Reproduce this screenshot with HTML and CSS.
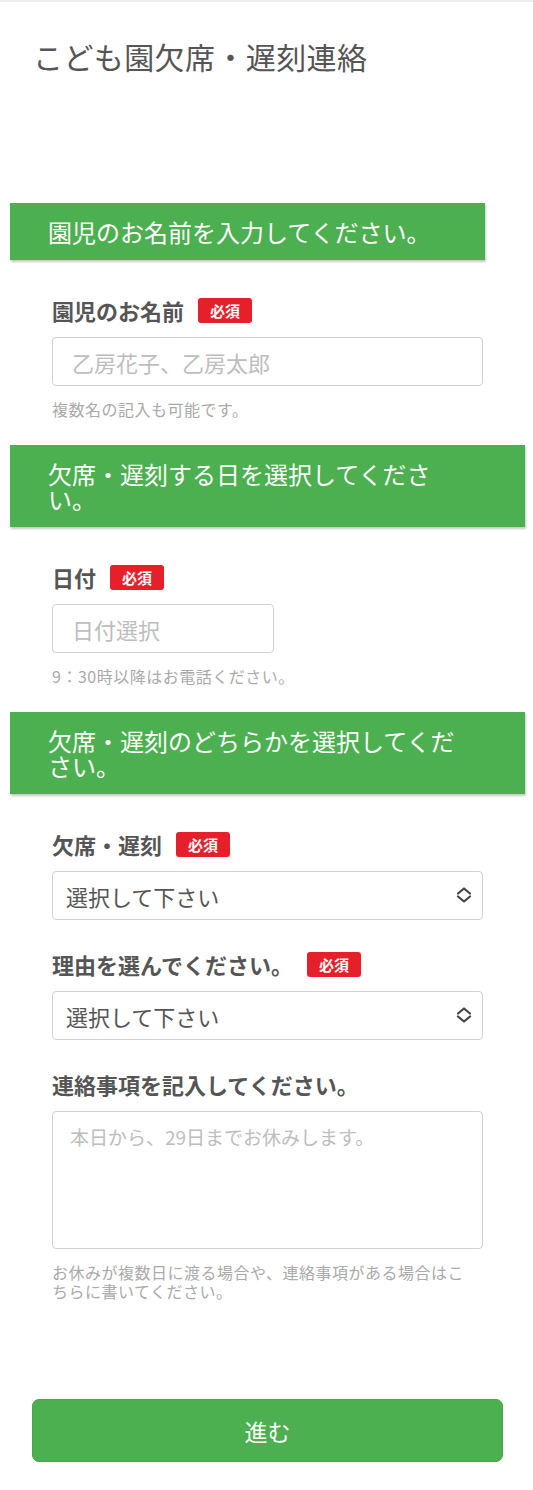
FILE: index.html
```html
<!DOCTYPE html>
<html lang="ja">
<head>
    <meta charset="UTF-8">
    <meta name="viewport" content="width=device-width, initial-scale=1.0">
    <title>こども園欠席・遅刻連絡</title>
    <link rel="stylesheet" href="styles.css">
</head>
<body>
    <div class="topbar"></div>
    <h1 class="page-title">こども園欠席・遅刻連絡</h1>

    <form class="contact-form" onsubmit="return false;">
        <!-- 園児の名前 -->
        <div class="section">
            <h2 class="section-head">園児のお名前を入力してください。</h2>
            <div class="fields">
                <div class="field">
                    <label class="field-label" for="childName">園児のお名前<span class="required">必須</span></label>
                    <input class="text-input" type="text" id="childName" placeholder="乙房花子、乙房太郎">
                    <p class="help">複数名の記入も可能です。</p>
                </div>
            </div>
        </div>

        <!-- 日付 -->
        <div class="section">
            <h2 class="section-head">欠席・遅刻する日を選択してください。</h2>
            <div class="fields">
                <div class="field">
                    <label class="field-label" for="absentDate">日付<span class="required">必須</span></label>
                    <input class="text-input date-input" type="text" id="absentDate" placeholder="日付選択">
                    <p class="help">9：30時以降はお電話ください。</p>
                </div>
            </div>
        </div>

        <!-- 欠席・遅刻と理由 -->
        <div class="section">
            <h2 class="section-head">欠席・遅刻のどちらかを選択してください。</h2>
            <div class="fields">
                <div class="field">
                    <label class="field-label" for="kind">欠席・遅刻<span class="required">必須</span></label>
                    <div class="select-wrap">
                        <select class="select-input" id="kind">
                            <option>選択して下さい</option>
                            <option>欠席</option>
                            <option>遅刻</option>
                        </select>
                        <svg class="select-arrow" width="18" height="18" viewBox="0 0 18 18" fill="none" stroke="#444" stroke-width="2.2" stroke-linecap="round" stroke-linejoin="round">
                            <path d="M3 7.5L9 2.5L15 7.5"/>
                            <path d="M3 10.5L9 15.5L15 10.5"/>
                        </svg>
                    </div>
                </div>
                <div class="field">
                    <label class="field-label" for="reason">理由を選んでください。<span class="required">必須</span></label>
                    <div class="select-wrap">
                        <select class="select-input" id="reason">
                            <option>選択して下さい</option>
                            <option>体調不良</option>
                            <option>通院</option>
                            <option>家庭の事情</option>
                            <option>その他</option>
                        </select>
                        <svg class="select-arrow" width="18" height="18" viewBox="0 0 18 18" fill="none" stroke="#444" stroke-width="2.2" stroke-linecap="round" stroke-linejoin="round">
                            <path d="M3 7.5L9 2.5L15 7.5"/>
                            <path d="M3 10.5L9 15.5L15 10.5"/>
                        </svg>
                    </div>
                </div>
                <div class="field">
                    <label class="field-label" for="message">連絡事項を記入してください。</label>
                    <textarea class="text-area" id="message" placeholder="本日から、29日までお休みします。"></textarea>
                    <p class="help help-wide">お休みが複数日に渡る場合や、連絡事項がある場合はこちらに書いてください。</p>
                </div>
            </div>
        </div>

        <div class="actions">
            <button type="submit" class="next-button">進む</button>
        </div>
    </form>
</body>
</html>
```

FILE: styles.css
```css
body {
    margin: 0;
    background-color: #fff;
    font-family: "Noto Sans CJK JP", "Noto Sans", sans-serif;
    color: #555;
}
.topbar {
    height: 2px;
    background-color: #eee;
}
.page-title {
    margin: 36px 0 0;
    padding-left: 33px;
    font-size: 30px;
    line-height: 36px;
    letter-spacing: 0.4px;
    font-weight: normal;
    color: #555;
}
.contact-form {
    margin-top: 129px;
}
.section + .section {
    margin-top: 26px;
}
.section-head {
    box-sizing: border-box;
    width: fit-content;
    max-width: 515px;
    margin: 0 0 0 10px;
    padding: 16px 54px 16px 38px;
    background-color: #4caf50;
    color: #fff;
    font-size: 24px;
    line-height: 25px;
    font-weight: normal;
    box-shadow: 1px 2px 2px rgba(0, 0, 0, 0.22);
}
.fields {
    padding: 0 50px 0 52px;
}
.field {
    margin-top: 37px;
}
.field + .field {
    margin-top: 31px;
}
.field-label {
    display: flex;
    align-items: center;
    min-height: 26px;
    margin-bottom: 14px;
    font-size: 22px;
    line-height: 26px;
    font-weight: bold;
    color: #555;
}
.required {
    margin-left: 14px;
    padding: 0 12px;
    border-radius: 3px;
    background-color: #e5202a;
    color: #fff;
    font-size: 15px;
    line-height: 25px;
    font-weight: bold;
}
.text-input,
.select-input,
.text-area {
    display: block;
    box-sizing: border-box;
    width: 100%;
    margin: 0;
    border: 1px solid #cfd1d4;
    border-radius: 4px;
    background-color: #fff;
    font-family: inherit;
    color: #555;
    outline: none;
}
.text-input {
    height: 49px;
    padding: 0 19px;
    font-size: 22px;
}
.date-input {
    width: 222px;
}
.text-input::placeholder,
.text-area::placeholder {
    color: #bdbdbd;
}
.select-wrap {
    position: relative;
}
.select-input {
    height: 49px;
    padding: 0 40px 0 13px;
    font-size: 22px;
    appearance: none;
    -webkit-appearance: none;
}
.select-arrow {
    position: absolute;
    right: 10px;
    top: 15px;
    pointer-events: none;
}
.text-area {
    height: 138px;
    padding: 13px 17px;
    font-size: 19px;
    line-height: 24px;
    resize: none;
}
.help {
    margin: 14px 0 0;
    font-size: 16px;
    line-height: 19px;
    letter-spacing: 0.5px;
    color: #aaa;
}
.help-wide {
    padding-right: 10px;
}
.actions {
    margin-top: 98px;
    padding: 0 30px 40px 32px;
}
.next-button {
    display: block;
    width: 100%;
    height: 63px;
    border: 1px solid #47a64b;
    border-radius: 7px;
    background-color: #4caf50;
    color: #fff;
    font-family: inherit;
    font-size: 23px;
    cursor: pointer;
}
.next-button:hover {
    background-color: #43a047;
}
```
